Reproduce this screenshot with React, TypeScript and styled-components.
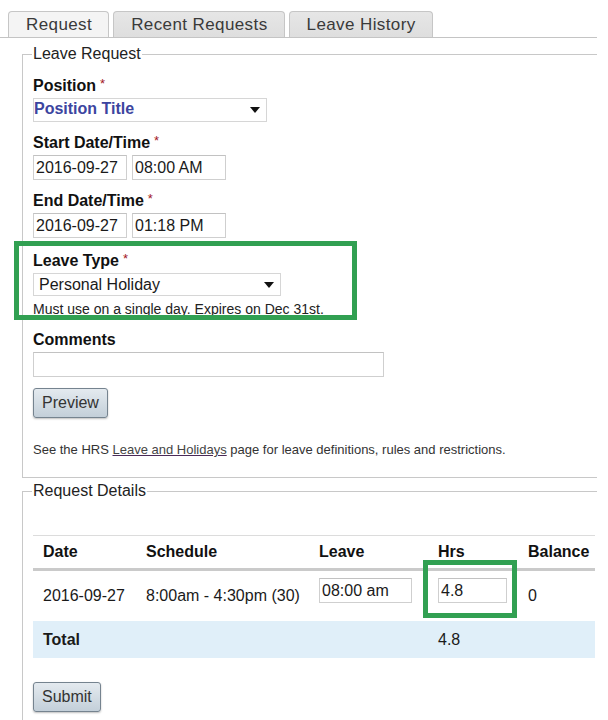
import React from 'react'
import styled, { createGlobalStyle } from 'styled-components'

const GlobalStyle = createGlobalStyle`
  body {
    margin: 0;
    background: #fff;
    color: #222;
    font-family: "Liberation Sans", Arial, sans-serif;
  }
`

const Page = styled.div`
  width: 597px;
  padding-top: 11px;
  overflow: hidden;
`

const TabBar = styled.div`
  display: flex;
  gap: 4px;
  padding-left: 8px;
  border-bottom: 1px solid #c4c4c4;
`

const Tab = styled.div<{ $active?: boolean }>`
  box-sizing: border-box;
  height: 26px;
  padding: 0 16px 0 17px;
  display: flex;
  align-items: center;
  border: 1px solid #c6c6c6;
  border-bottom: none;
  border-radius: 4px 4px 0 0;
  background: ${(p) => (p.$active ? '#f4f4f4' : 'linear-gradient(#e6e6e6, #dedede)')};
  color: #3a3a3a;
  font-size: 17px;
  letter-spacing: 0.4px;
`

const Fieldset = styled.fieldset<{ $top: number; $bottom: number }>`
  margin: ${(p) => p.$top}px 0 0 22px;
  padding: 14px 2px ${(p) => p.$bottom}px 10px;
  border: 1px solid #c8c8c8;
  border-right: none;
  min-width: 0;
`

const Legend = styled.legend`
  padding: 0 1px;
  margin-left: -1px;
  font-size: 16px;
  line-height: 18px;
  color: #222;
`

const Field = styled.div<{ $gap?: number }>`
  position: relative;
  margin-top: ${(p) => p.$gap ?? 0}px;
  display: flex;
  flex-direction: column;
  align-items: flex-start;
`

const Label = styled.div`
  font-size: 16px;
  line-height: 18px;
  font-weight: bold;
  color: #111;
  margin-bottom: 3px;
`

const Required = styled.span`
  color: #a3181e;
  font-weight: normal;
  font-size: 13px;
  line-height: 1;
  margin-left: 4px;
  vertical-align: top;
`

const FakeSelect = styled.div<{ $width: number; $strong?: boolean }>`
  box-sizing: border-box;
  width: ${(p) => p.$width}px;
  height: ${(p) => (p.$strong ? 24 : 23)}px;
  display: flex;
  align-items: ${(p) => (p.$strong ? 'flex-start' : 'center')};
  justify-content: space-between;
  padding: ${(p) => (p.$strong ? '0 6px 0 0' : '0 6px 0 5px')};
  border: 1px solid #d6d6d6;
  background: #fff;
  font-size: 16px;
  line-height: 19px;
  font-weight: ${(p) => (p.$strong ? 'bold' : 'normal')};
  color: ${(p) => (p.$strong ? '#3c45a0' : '#1a1a1a')};

  svg {
    align-self: center;
    flex: none;
  }
`

const InputRow = styled.div`
  display: flex;
  gap: 5px;
`

const TextInput = styled.input<{ $width: number }>`
  box-sizing: border-box;
  width: ${(p) => p.$width}px;
  height: 25px;
  padding: 0 2px;
  border: 1px solid #cfcfcf;
  border-top-color: #c2c2c2;
  background: #fff;
  color: #1a1a1a;
  font-family: inherit;
  font-size: 16px;
  outline: none;
`

const HelpText = styled.div`
  margin-top: 5px;
  font-size: 14px;
  line-height: 16px;
  color: #222;
`

const Button = styled.button<{ $gap: number }>`
  display: block;
  margin-top: ${(p) => p.$gap}px;
  height: 30px;
  padding: 0 8px;
  border: 1px solid #75838f;
  border-radius: 3px;
  background: linear-gradient(#e4eaef, #c3cfd9);
  box-shadow: 0 1px 2px rgba(0, 0, 0, 0.25);
  color: #333;
  font-family: inherit;
  font-size: 16px;
`

const Note = styled.p`
  margin: 24px 0 0;
  font-size: 13px;
  line-height: 15px;
  color: #333;
`

const NoteLink = styled.a`
  color: #444;
  text-decoration: underline;
  text-decoration-color: #4a2a57;
`

const Callout = styled.div`
  position: absolute;
  box-sizing: border-box;
  border: 5px solid #31a052;
  pointer-events: none;
`

const LeaveTypeCallout = styled(Callout)`
  top: -11px;
  left: -19px;
  width: 343px;
  height: 79px;
`

const HoursCallout = styled(Callout)`
  top: -18px;
  left: -15px;
  width: 94px;
  height: 58px;
`

const Details = styled.table`
  margin-top: 21px;
  width: 100%;
  table-layout: fixed;
  border-collapse: collapse;
  border-top: 1px solid #dcdcdc;
  font-size: 16px;
`

const HeadCell = styled.th`
  height: 32px;
  padding: 0 10px;
  text-align: left;
  font-weight: bold;
  color: #111;
  border-bottom: 3px solid #cacaca;
  white-space: nowrap;
`

const Cell = styled.td`
  height: 50px;
  padding: 0 10px;
  color: #1a1a1a;
  white-space: nowrap;
`

const TotalRow = styled.tr`
  background: #e0eff9;

  td {
    height: 37px;
  }
`

const HighlightWrap = styled.span`
  position: relative;
  display: inline-block;
  vertical-align: middle;
  margin-top: -12px;
`

const Arrow = () => (
  <svg width="10" height="6" viewBox="0 0 10 6">
    <path d="M0 0 H10 L5 6 Z" fill="#111" />
  </svg>
)

export default function App() {
  return (
    <>
      <GlobalStyle />
      <Page>
        <TabBar>
          <Tab $active>Request</Tab>
          <Tab>Recent Requests</Tab>
          <Tab>Leave History</Tab>
        </TabBar>

        <Fieldset $top={7} $bottom={20}>
          <Legend>Leave Request</Legend>
          <Field>
            <Label>
              Position<Required>*</Required>
            </Label>
            <FakeSelect $width={234} $strong>
              Position Title
              <Arrow />
            </FakeSelect>
          </Field>
          <Field $gap={12}>
            <Label>
              Start Date/Time<Required>*</Required>
            </Label>
            <InputRow>
              <TextInput $width={94} readOnly value="2016-09-27" />
              <TextInput $width={94} readOnly value="08:00 AM" />
            </InputRow>
          </Field>
          <Field $gap={12}>
            <Label>
              End Date/Time<Required>*</Required>
            </Label>
            <InputRow>
              <TextInput $width={94} readOnly value="2016-09-27" />
              <TextInput $width={94} readOnly value="01:18 PM" />
            </InputRow>
          </Field>
          <Field $gap={14}>
            <LeaveTypeCallout />
            <Label>
              Leave Type<Required>*</Required>
            </Label>
            <FakeSelect $width={248}>
              Personal Holiday
              <Arrow />
            </FakeSelect>
            <HelpText>Must use on a single day. Expires on Dec 31st.</HelpText>
          </Field>
          <Field $gap={14}>
            <Label>Comments</Label>
            <TextInput $width={351} readOnly value="" />
          </Field>
          <Button $gap={11}>Preview</Button>
          <Note>
            See the HRS <NoteLink href="#">Leave and Holidays</NoteLink> page for leave
            definitions, rules and restrictions.
          </Note>
        </Fieldset>

        <Fieldset $top={4} $bottom={40}>
          <Legend>Request Details</Legend>
          <Details>
            <colgroup>
              <col style={{ width: 103 }} />
              <col style={{ width: 173 }} />
              <col style={{ width: 119 }} />
              <col style={{ width: 90 }} />
              <col style={{ width: 77 }} />
            </colgroup>
            <thead>
              <tr>
                <HeadCell>Date</HeadCell>
                <HeadCell>Schedule</HeadCell>
                <HeadCell>Leave</HeadCell>
                <HeadCell>Hrs</HeadCell>
                <HeadCell>Balance</HeadCell>
              </tr>
            </thead>
            <tbody>
              <tr>
                <Cell>2016-09-27</Cell>
                <Cell>8:00am - 4:30pm (30)</Cell>
                <Cell>
                  <HighlightWrap>
                    <TextInput $width={93} readOnly value="08:00 am" />
                  </HighlightWrap>
                </Cell>
                <Cell>
                  <HighlightWrap>
                    <HoursCallout />
                    <TextInput $width={69} readOnly value="4.8" />
                  </HighlightWrap>
                </Cell>
                <Cell>0</Cell>
              </tr>
              <TotalRow>
                <Cell>
                  <b>Total</b>
                </Cell>
                <Cell />
                <Cell />
                <Cell>4.8</Cell>
                <Cell />
              </TotalRow>
            </tbody>
          </Details>
          <Button $gap={24}>Submit</Button>
        </Fieldset>
      </Page>
    </>
  )
}
